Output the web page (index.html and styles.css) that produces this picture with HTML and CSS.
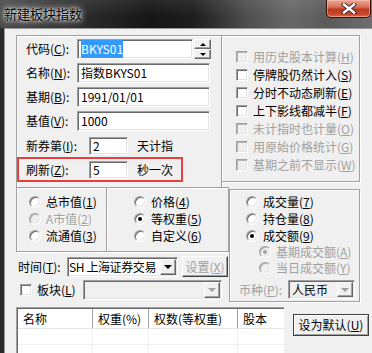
FILE: index.html
```html
<!DOCTYPE html>
<html lang="zh-CN">
<head>
    <meta charset="UTF-8">
    <title>新建板块指数</title>
    <link rel="stylesheet" href="styles.css">
</head>
<body>
<div class="window">
    <div class="titlebar">
        <span class="title">新建板块指数</span>
        <span class="close">
            <svg width="16" height="11" viewBox="0 0 16 11">
                <path d="M3 1.5 L13 9.5 M13 1.5 L3 9.5" stroke="#2b2b2b" stroke-width="4.2" stroke-linecap="square"/>
                <path d="M3 1.5 L13 9.5 M13 1.5 L3 9.5" stroke="#fff" stroke-width="2.4" stroke-linecap="square"/>
            </svg>
        </span>
    </div>

    <div class="client">
        <div class="top">
            <div class="box params">
                <div class="row">
                    <span class="lbl">代码(<u>C</u>):</span>
                    <span class="input w-code"><span class="sel">BKYS01</span></span>
                    <span class="spin">
                        <span class="spin-btn"><i class="tri-up"></i></span>
                        <span class="spin-btn"><i class="tri-down"></i></span>
                    </span>
                </div>
                <div class="row">
                    <span class="lbl">名称(<u>N</u>):</span>
                    <span class="input w-long">指数BKYS01</span>
                </div>
                <div class="row">
                    <span class="lbl">基期(<u>B</u>):</span>
                    <span class="input w-long">1991/01/01</span>
                </div>
                <div class="row">
                    <span class="lbl">基值(<u>V</u>):</span>
                    <span class="input w-long">1000</span>
                </div>
                <div class="row row-small row-new">
                    <span class="lbl lbl-wide">新券第(<u>I</u>):</span>
                    <span class="input w-short">2</span>
                    <span class="unit">天计指</span>
                </div>
                <div class="row row-small row-refresh">
                    <span class="lbl lbl-wide">刷新(<u>Z</u>):</span>
                    <span class="input w-short">5</span>
                    <span class="unit">秒一次</span>
                </div>
            </div>

            <div class="box opts">
                <div class="check-row disabled"><span class="check"></span><span class="check-lbl">用历史股本计算(<u>H</u>)</span></div>
                <div class="check-row"><span class="check"></span><span class="check-lbl">停牌股仍然计入(<u>S</u>)</span></div>
                <div class="check-row"><span class="check"></span><span class="check-lbl">分时不动态刷新(<u>E</u>)</span></div>
                <div class="check-row"><span class="check"></span><span class="check-lbl">上下影线都减半(<u>F</u>)</span></div>
                <div class="check-row disabled"><span class="check"></span><span class="check-lbl">未计指时也计量(<u>O</u>)</span></div>
                <div class="check-row disabled"><span class="check"></span><span class="check-lbl">用原始价格统计(<u>G</u>)</span></div>
                <div class="check-row disabled"><span class="check"></span><span class="check-lbl">基期之前不显示(<u>W</u>)</span></div>
            </div>
        </div>

        <div class="mid">
            <div class="mid-left">
                <div class="radio-boxes">
                    <div class="box cap">
                        <div class="radio-row"><span class="radio"></span><span class="radio-lbl">总市值(<u>1</u>)</span></div>
                        <div class="radio-row disabled"><span class="radio"></span><span class="radio-lbl emboss">A市值(<u>2</u>)</span></div>
                        <div class="radio-row"><span class="radio"></span><span class="radio-lbl">流通值(<u>3</u>)</span></div>
                    </div>
                    <div class="box price">
                        <div class="radio-row"><span class="radio"></span><span class="radio-lbl">价格(<u>4</u>)</span></div>
                        <div class="radio-row"><span class="radio on"></span><span class="radio-lbl">等权重(<u>5</u>)</span></div>
                        <div class="radio-row"><span class="radio"></span><span class="radio-lbl">自定义(<u>6</u>)</span></div>
                    </div>
                </div>

                <div class="time-row">
                    <span class="time-lbl">时间(<u>T</u>):</span>
                    <span class="combo w-time">
                        <span class="combo-text">SH 上海证券交易</span>
                        <span class="combo-btn"><i class="tri-big"></i></span>
                    </span>
                    <span class="btn btn-set">设置(<u>X</u>)</span>
                </div>

                <div class="block-row">
                    <span class="check block-check"></span>
                    <span class="block-lbl">板块(<u>L</u>)</span>
                    <span class="combo w-block disabled">
                        <span class="combo-text"></span>
                        <span class="combo-btn"><i class="tri-big"></i></span>
                    </span>
                </div>
            </div>

            <div class="box vol">
                <div class="radio-row"><span class="radio"></span><span class="radio-lbl">成交量(<u>7</u>)</span></div>
                <div class="radio-row"><span class="radio"></span><span class="radio-lbl">持仓量(<u>8</u>)</span></div>
                <div class="radio-row"><span class="radio on"></span><span class="radio-lbl">成交额(<u>9</u>)</span></div>
                <div class="radio-row sub disabled"><span class="radio on"></span><span class="radio-lbl">基期成交额(<u>A</u>)</span></div>
                <div class="radio-row sub disabled"><span class="radio"></span><span class="radio-lbl">当日成交额(<u>Y</u>)</span></div>
                <div class="currency-row disabled">
                    <span class="cur-lbl">币种(<u>P</u>):</span>
                    <span class="combo w-cur">
                        <span class="combo-text">人民币</span>
                        <span class="combo-btn"><i class="tri-big"></i></span>
                    </span>
                </div>
            </div>
        </div>

        <div class="bottom">
            <div class="list">
                <div class="list-inner">
                    <div class="list-head">
                        <span class="col c1">名称</span>
                        <span class="col c2">权重(%)</span>
                        <span class="col c3">权数(等权重)</span>
                        <span class="col c4">股本</span>
                    </div>
                    <div class="list-row">
                        <span class="col c1"></span>
                        <span class="col c2"></span>
                        <span class="col c3"></span>
                        <span class="col c4"></span>
                    </div>
                    <div class="list-row">
                        <span class="col c1"></span>
                        <span class="col c2"></span>
                        <span class="col c3"></span>
                        <span class="col c4"></span>
                    </div>
                </div>
            </div>
            <span class="btn btn-default">设为默认(<u>U</u>)</span>
        </div>
    </div>
</div>
</body>
</html>
```

FILE: styles.css
```css
body {
    margin: 0;
    font-family: "Noto Sans CJK SC", "Noto Sans", sans-serif;
    font-size: 12px;
    color: #000;
    background: #1c1c1c;
}

u {
    text-decoration: underline;
    text-underline-offset: 1px;
}

.window {
    width: 372px;
    height: 353px;
    overflow: hidden;
    display: flex;
    flex-direction: column;
    background: #2a2a2a;
}

/* title bar (aero glass) */
.titlebar {
    flex: none;
    height: 28px;
    display: flex;
    align-items: flex-start;
    background:
        linear-gradient(180deg, rgba(255, 255, 255, 0.08), rgba(0, 0, 0, 0) 60%),
        linear-gradient(90deg, #4a4a4a 0%, #2c2c2c 22%, #161616 40%, #1d1d1d 52%, #4d4d4d 66%, #686868 78%, #5a5a5a 88%, #6e6e6e 100%);
}

.title {
    margin: 6px 0 0 4px;
    font-size: 13px;
    line-height: 16px;
    color: #000;
    text-shadow: 0 0 3px #fff, 0 0 6px rgba(255, 255, 255, 0.85), 0 0 10px rgba(255, 255, 255, 0.6);
}

.close {
    margin-left: auto;
    margin-right: 1px;
    width: 45px;
    height: 18px;
    box-sizing: border-box;
    border: 1px solid #3a1005;
    border-top: none;
    border-radius: 0 0 5px 5px;
    background: linear-gradient(180deg, #e9a796 0%, #d9735b 40%, #c0391f 55%, #c8472c 85%, #d8765a 100%);
    box-shadow: inset 0 0 0 1px rgba(255, 200, 190, 0.5);
    display: flex;
    align-items: center;
    justify-content: center;
}

/* client area */
.client {
    flex: 1;
    margin-left: 4px;
    border-top: 1px solid #9a9a9a;
    border-left: 1px solid #9a9a9a;
    background: #f0f0f0;
    padding: 6px 0 0 11px;
}

.box {
    box-sizing: border-box;
    border: 1px solid #a0a0a0;
    box-shadow: inset 1px 1px 0 #fff, 1px 1px 0 #fff;
}

.top {
    display: flex;
    align-items: flex-start;
}

.params {
    width: 206px;
    height: 152px;
    border-bottom: none;
    padding: 3px 0 0 9px;
}

.row {
    display: flex;
    align-items: center;
    height: 20px;
    margin-bottom: 4px;
    line-height: 14px;
}

.lbl {
    width: 51px;
    flex: none;
}

.lbl-wide {
    width: 63px;
}

.input {
    box-sizing: border-box;
    height: 20px;
    padding: 2px 0 0 3px;
    background: #fff;
    border: 1px solid;
    border-color: #a0a0a0 #fff #fff #a0a0a0;
    box-shadow: inset 1px 1px 0 #696969, inset -1px -1px 0 #e3e3e3;
    line-height: 14px;
    white-space: nowrap;
    overflow: hidden;
}

.w-code { width: 116px; }
.w-long { width: 133px; }
.w-short { width: 39px; height: 18px; padding-top: 1px; }

.sel {
    background: #3399ff;
    color: #fff;
    padding: 1px 0;
}

.spin {
    margin-left: 1px;
    width: 17px;
    height: 20px;
    display: flex;
    flex-direction: column;
}

.spin-btn {
    box-sizing: border-box;
    height: 10px;
    display: flex;
    align-items: center;
    justify-content: center;
    background: #f0f0f0;
    border: 1px solid;
    border-color: #fff #696969 #696969 #fff;
    box-shadow: inset -1px -1px 0 #a0a0a0;
}

.tri-up {
    width: 0;
    height: 0;
    border-left: 3px solid transparent;
    border-right: 3px solid transparent;
    border-bottom: 3px solid #000;
}

.tri-down {
    width: 0;
    height: 0;
    border-left: 3px solid transparent;
    border-right: 3px solid transparent;
    border-top: 3px solid #000;
}

.row-small {
    height: 18px;
}

.row-new {
    margin-top: 6px;
    margin-bottom: 2px;
}

.row-refresh {
    box-sizing: border-box;
    width: 166px;
    height: 25px;
    margin: 0 0 0 -9px;
    padding: 1px 0 0 7px;
    border: 2px solid #e8403e;
}

.unit {
    margin-left: 9px;
}

/* check boxes */
.opts {
    width: 138px;
    height: 147px;
    border-left: none;
    padding: 12px 0 0 14px;
}

.check-row {
    display: flex;
    align-items: center;
    height: 18px;
    line-height: 14px;
}

.check {
    box-sizing: border-box;
    flex: none;
    width: 12px;
    height: 12px;
    background: #fff;
    border: 1px solid;
    border-color: #a0a0a0 #fff #fff #a0a0a0;
    box-shadow: inset 1px 1px 0 #696969, inset -1px -1px 0 #e3e3e3;
}

.check-lbl {
    margin-left: 5px;
    white-space: nowrap;
}

.disabled .check {
    background: #f0f0f0;
    box-shadow: inset 1px 1px 0 #b5b5b5, inset -1px -1px 0 #e3e3e3;
}

.disabled .check-lbl,
.disabled .radio-lbl,
.disabled .cur-lbl {
    color: #a0a0a0;
}

/* radio groups */
.mid {
    display: flex;
    align-items: flex-start;
}

.mid-left {
    width: 213px;
}

.radio-boxes {
    display: flex;
}

.cap {
    width: 91px;
    height: 65px;
    padding: 5px 0 0 12px;
}

.price {
    width: 122px;
    height: 65px;
    border-left: none;
    padding: 5px 0 0 27px;
}

.radio-row {
    display: flex;
    align-items: center;
    height: 17px;
    line-height: 14px;
    white-space: nowrap;
}

.radio {
    position: relative;
    box-sizing: border-box;
    flex: none;
    width: 12px;
    height: 12px;
    border-radius: 50%;
    background: #fff;
    border: 1px solid;
    border-color: #a0a0a0 #fff #fff #a0a0a0;
    box-shadow: inset 1px 1px 0 #696969, inset -1px -1px 0 #e3e3e3;
}

.radio.on::after {
    content: "";
    position: absolute;
    left: 3px;
    top: 3px;
    width: 4px;
    height: 4px;
    border-radius: 50%;
    background: #000;
}

.disabled .radio {
    background: #f0f0f0;
    box-shadow: inset 1px 1px 0 #b5b5b5, inset -1px -1px 0 #e3e3e3;
}

.disabled .radio.on::after {
    background: #a0a0a0;
}

.radio-lbl {
    margin-left: 5px;
}

.emboss {
    text-shadow: 1px 1px 0 #fff;
}

.time-row {
    display: flex;
    align-items: center;
    height: 21px;
    margin-top: 4px;
    line-height: 14px;
}

.time-lbl {
    margin-left: 2px;
    width: 49px;
    flex: none;
}

.combo {
    box-sizing: border-box;
    display: flex;
    align-items: center;
    height: 20px;
    padding: 1px;
    background: #fff;
    border: 1px solid;
    border-color: #a0a0a0 #fff #fff #a0a0a0;
    box-shadow: inset 1px 1px 0 #696969, inset -1px -1px 0 #e3e3e3;
}

.combo-text {
    flex: 1;
    min-width: 0;
    padding-left: 1px;
    white-space: nowrap;
    line-height: 14px;
}

.w-time .combo-text {
    letter-spacing: -0.4px;
    padding-left: 0;
}

.combo-btn {
    box-sizing: border-box;
    flex: none;
    width: 16px;
    height: 100%;
    display: flex;
    align-items: center;
    justify-content: center;
    background: #f0f0f0;
    border: 1px solid;
    border-color: #fff #696969 #696969 #fff;
    box-shadow: inset -1px -1px 0 #a0a0a0;
}

.tri-big {
    width: 0;
    height: 0;
    border-left: 4px solid transparent;
    border-right: 4px solid transparent;
    border-top: 4px solid #000;
}

.combo.disabled,
.disabled .combo {
    background: #f0f0f0;
}

.combo.disabled .tri-big,
.disabled .combo .tri-big {
    border-top-color: #a0a0a0;
}

.w-time { width: 111px; }
.w-block { width: 139px; }
.w-cur { width: 67px; height: 19px; }

.btn {
    box-sizing: border-box;
    display: flex;
    align-items: center;
    justify-content: center;
    background: #f0f0f0;
    border: 1px solid;
    border-color: #fff #404040 #404040 #fff;
    box-shadow: inset -1px -1px 0 #a0a0a0;
    line-height: 14px;
    white-space: nowrap;
}

.btn-set {
    margin-left: 4px;
    width: 46px;
    height: 21px;
    color: #a0a0a0;
}

.block-row {
    display: flex;
    align-items: center;
    height: 20px;
    margin-top: 3px;
    line-height: 14px;
}

.block-check {
    margin-left: 4px;
}

.block-lbl {
    margin-left: 5px;
    width: 46px;
    flex: none;
}

.vol {
    margin-top: 2px;
    width: 131px;
    height: 113px;
    padding: 3px 0 0 16px;
}

.radio-row.sub {
    height: 16px;
    margin-left: 13px;
}

.currency-row {
    display: flex;
    align-items: center;
    margin: 4px 0 0 -7px;
    line-height: 14px;
}

.cur-lbl {
    width: 49px;
    flex: none;
}

.w-cur .combo-text {
    color: #000;
    padding-left: 2px;
}

/* list and default button */
.bottom {
    display: flex;
    align-items: flex-start;
    margin-top: 5px;
}

.list {
    width: 268px;
    height: 60px;
    box-sizing: border-box;
    border-top: 1px solid #a0a0a0;
    border-left: 1px solid #a0a0a0;
}

.list-inner {
    height: 100%;
    border-top: 1px solid #696969;
    border-left: 1px solid #696969;
    background: #fff;
}

.list-head,
.list-row {
    display: flex;
}

.list-head {
    height: 19px;
    line-height: 19px;
    border-bottom: 1px solid #e5e5e5;
}

.list-row {
    height: 15px;
    border-bottom: 1px solid #f0f0f0;
}

.col {
    box-sizing: border-box;
    padding-left: 5px;
    border-right: 1px solid #f0f0f0;
    white-space: nowrap;
}

.list-head .col {
    border-right-color: #a0a0a0;
}

.c1 { width: 75px; }
.c2 { width: 56px; }
.c3 { width: 89px; }
.c4 { flex: 1; border-right: none; }

.btn-default {
    margin: 7px 0 0 9px;
    width: 76px;
    height: 22px;
    border-color: #404040;
    box-shadow: inset 1px 1px 0 #fff, inset -1px -1px 0 #a0a0a0;
}
```
